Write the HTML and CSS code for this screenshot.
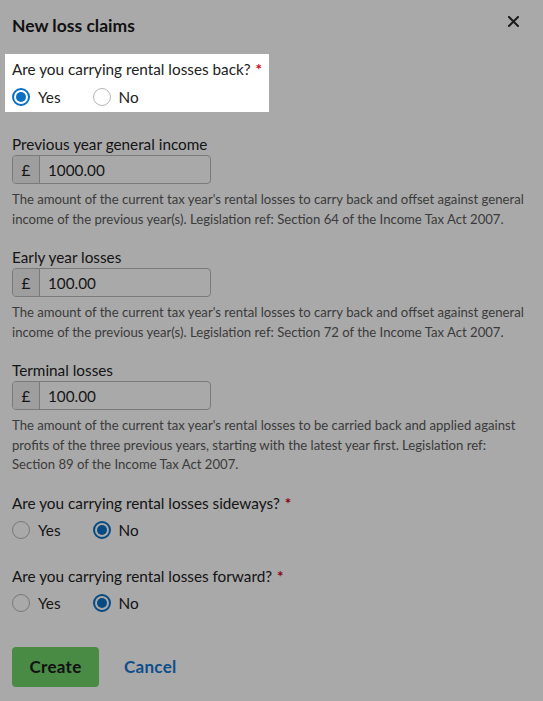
FILE: index.html
```html
<!DOCTYPE html>
<html lang="en">
<head>
<meta charset="utf-8">
<title>New loss claims</title>
<link rel="stylesheet" href="styles.css">
</head>
<body>
<div class="modal">
  <div class="modal-header">
    <h1 class="modal-title">New loss claims</h1>
    <button class="close" aria-label="Close">
      <svg width="11" height="11" viewBox="0 0 11 11"><path d="M1 1 L10 10 M10 1 L1 10" stroke="#2b2b2b" stroke-width="2" stroke-linecap="square"/></svg>
    </button>
  </div>

  <div class="field field-radio spotlight">
    <div class="label">Are you carrying rental losses back?<span class="req">*</span></div>
    <div class="radios">
      <label class="radio"><span class="dot checked"></span>Yes</label>
      <label class="radio"><span class="dot"></span>No</label>
    </div>
  </div>

  <div class="field">
    <div class="label">Previous year general income</div>
    <div class="input-group"><span class="prefix">£</span><span class="value">1000.00</span></div>
    <p class="help">The amount of the current tax year's rental losses to carry back and offset against general income of the previous year(s). Legislation ref: Section 64 of the Income Tax Act 2007.</p>
  </div>

  <div class="field">
    <div class="label">Early year losses</div>
    <div class="input-group"><span class="prefix">£</span><span class="value">100.00</span></div>
    <p class="help">The amount of the current tax year's rental losses to carry back and offset against general income of the previous year(s). Legislation ref: Section 72 of the Income Tax Act 2007.</p>
  </div>

  <div class="field">
    <div class="label">Terminal losses</div>
    <div class="input-group"><span class="prefix">£</span><span class="value">100.00</span></div>
    <p class="help">The amount of the current tax year's rental losses to be carried back and applied against profits of the three previous years, starting with the latest year first. Legislation ref: Section 89 of the Income Tax Act 2007.</p>
  </div>

  <div class="field field-radio">
    <div class="label">Are you carrying rental losses sideways?<span class="req">*</span></div>
    <div class="radios">
      <label class="radio"><span class="dot"></span>Yes</label>
      <label class="radio"><span class="dot checked"></span>No</label>
    </div>
  </div>

  <div class="field field-radio">
    <div class="label">Are you carrying rental losses forward?<span class="req">*</span></div>
    <div class="radios">
      <label class="radio"><span class="dot"></span>Yes</label>
      <label class="radio"><span class="dot checked"></span>No</label>
    </div>
  </div>

  <div class="actions">
    <button class="btn-create">Create</button>
    <a class="btn-cancel" href="#">Cancel</a>
  </div>
</div>
</body>
</html>
```

FILE: styles.css
```css
html, body {
  margin: 0;
  padding: 0;
  background: #fff;
}
body {
  font-family: Lato, "Noto Sans", sans-serif;
  color: #1f1f1f;
}
.modal {
  padding: 0 12px;
  min-height: 701px;
  box-sizing: border-box;
}
.modal-header {
  display: flex;
  align-items: center;
  justify-content: space-between;
  height: 50px;
}
.modal-title {
  margin: 0;
  font-size: 17.5px;
  font-weight: 700;
  color: #1a1a1a;
}
.close {
  border: 0;
  background: none;
  padding: 0;
  margin-right: 12px;
  margin-top: -8px;
  display: flex;
}
.field {
  margin-bottom: 19px;
}
.field-radio {
  margin-bottom: 25px;
}
.spotlight {
  position: relative;
  z-index: 10;
  background: #fff;
  margin: 4px -7px 23px;
  padding: 6px 7px 3px;
  width: fit-content;
  box-shadow: 0 0 0 2000px rgba(0, 0, 0, 0.337);
}
.label {
  font-size: 15.3px;
  line-height: 18px;
  color: #222;
  margin-bottom: 2px;
}
.field-radio .label {
  margin-bottom: 6px;
}
.spotlight .label {
  margin-bottom: 7px;
}
.req {
  color: #d0021b;
  font-weight: 700;
  margin-left: 5px;
}
.radios {
  display: flex;
  gap: 32px;
  height: 24px;
  align-items: center;
}
.radio {
  display: flex;
  align-items: center;
  gap: 8px;
  font-size: 15.3px;
  color: #222;
}
.dot {
  width: 16px;
  height: 16px;
  border: 1px solid #b5b5b5;
  border-radius: 50%;
  box-sizing: content-box;
  position: relative;
  background: #fff;
}
.dot.checked {
  border: 2px solid #0a70c6;
  width: 14px;
  height: 14px;
}
.dot.checked::after {
  content: "";
  position: absolute;
  inset: 2px;
  border-radius: 50%;
  background: #0a70c6;
}
.input-group {
  display: flex;
  width: 199px;
  height: 29px;
  border: 1px solid #b8b8b8;
  border-radius: 4px;
  box-sizing: border-box;
  overflow: hidden;
  font-size: 15.3px;
  color: #1f1f1f;
}
.prefix {
  width: 26px;
  display: flex;
  align-items: center;
  justify-content: center;
  background: #eeeeee;
  border-right: 1px solid #b8b8b8;
}
.value {
  display: flex;
  align-items: center;
  padding-left: 8px;
}
.help {
  margin: 6px 0 0;
  max-width: 516px;
  font-size: 13.13px;
  line-height: 19.5px;
  color: #5a5a5a;
}
.actions {
  display: flex;
  align-items: center;
  gap: 25px;
  margin-top: 32px;
}
.btn-create {
  font: inherit;
  font-size: 17px;
  font-weight: 700;
  letter-spacing: 0.3px;
  width: 87px;
  height: 40px;
  border: 0;
  border-radius: 4px;
  background: #6fd067;
  color: #1a1a1a;
}
.btn-cancel {
  font-size: 17px;
  font-weight: 700;
  letter-spacing: 0.3px;
  color: #1676d2;
  text-decoration: none;
}
```
